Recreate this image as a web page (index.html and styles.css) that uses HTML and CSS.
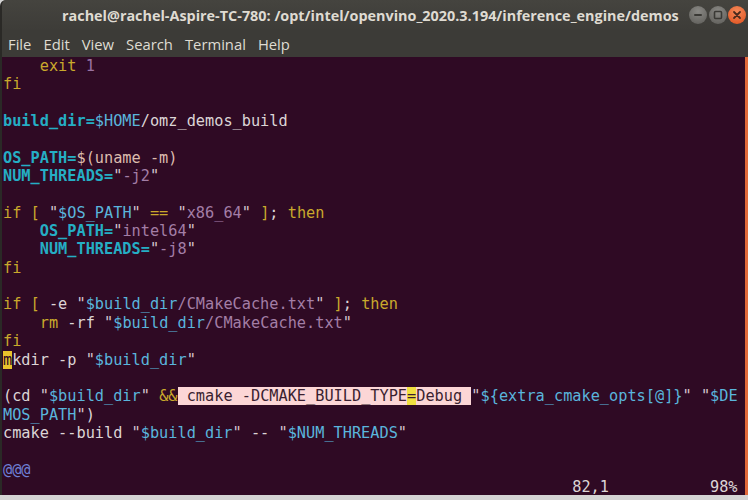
FILE: index.html
```html
<!DOCTYPE html>
<html lang="en">
<head>
  <meta charset="UTF-8">
  <title>Terminal - vim build_demos.sh</title>
  <link rel="stylesheet" href="styles.css">
</head>
<body>
  <div class="window">
    <div class="titlebar">
      <div class="title">rachel@rachel-Aspire-TC-780: /opt/intel/openvino_2020.3.194/inference_engine/demos</div>
      <div class="win-buttons">
        <span class="win-btn">
          <svg width="18" height="18" viewBox="0 0 18 18"><rect x="5" y="8" width="8" height="2" rx="1" fill="#3a3935"/></svg>
        </span>
        <span class="win-btn">
          <svg width="18" height="18" viewBox="0 0 18 18"><rect x="5.5" y="5.5" width="7" height="7" rx="1" fill="none" stroke="#3a3935" stroke-width="1.6"/></svg>
        </span>
        <span class="win-btn close">
          <svg width="18" height="18" viewBox="0 0 18 18"><path d="M6 6 L12 12 M12 6 L6 12" stroke="#4a2a1c" stroke-width="1.8" stroke-linecap="round"/></svg>
        </span>
      </div>
    </div>

    <div class="menubar">
      <span>File</span>
      <span>Edit</span>
      <span>View</span>
      <span>Search</span>
      <span>Terminal</span>
      <span>Help</span>
    </div>

    <div class="terminal">
      <div class="screen">
        <div class="row">    <span class="kw">exit</span> <span class="num">1</span></div>
        <div class="row"><span class="kw">fi</span></div>
        <div class="row"> </div>
        <div class="row"><span class="id">build_dir=</span><span class="var">$HOME</span>/omz_demos_build</div>
        <div class="row"> </div>
        <div class="row"><span class="id">OS_PATH=</span><span class="sub">$(uname -m)</span></div>
        <div class="row"><span class="id">NUM_THREADS=</span><span class="q">"</span><span class="str">-j2</span><span class="q">"</span></div>
        <div class="row"> </div>
        <div class="row"><span class="kw">if [</span> <span class="q">"</span><span class="var">$OS_PATH</span><span class="q">"</span> <span class="kw">==</span> <span class="q">"</span><span class="str">x86_64</span><span class="q">"</span> <span class="kw">]</span>; <span class="kw">then</span></div>
        <div class="row">    <span class="id">OS_PATH=</span><span class="q">"</span><span class="str">intel64</span><span class="q">"</span></div>
        <div class="row">    <span class="id">NUM_THREADS=</span><span class="q">"</span><span class="str">-j8</span><span class="q">"</span></div>
        <div class="row"><span class="kw">fi</span></div>
        <div class="row"> </div>
        <div class="row"><span class="kw">if [</span> -e <span class="q">"</span><span class="var">$build_dir</span><span class="str">/CMakeCache.txt</span><span class="q">"</span> <span class="kw">]</span>; <span class="kw">then</span></div>
        <div class="row">    <span class="kw">rm</span> -rf <span class="q">"</span><span class="var">$build_dir</span><span class="str">/CMakeCache.txt</span><span class="q">"</span></div>
        <div class="row"><span class="kw">fi</span></div>
        <div class="row"><span class="cursor">m</span>kdir -p <span class="q">"</span><span class="var">$build_dir</span><span class="q">"</span></div>
        <div class="row"> </div>
        <div class="row">(cd <span class="q">"</span><span class="var">$build_dir</span><span class="q">"</span> <span class="kw">&amp;&amp;</span><span class="hl"> cmake -DCMAKE_BUILD_TYPE<span class="mark">=</span>Debug </span><span class="q">"</span><span class="var">${extra_cmake_opts[@]}</span><span class="q">"</span> <span class="q">"</span><span class="var">$DE</span></div>
        <div class="row"><span class="var">MOS_PATH</span><span class="q">"</span>)</div>
        <div class="row">cmake --build <span class="q">"</span><span class="var">$build_dir</span><span class="q">"</span> -- <span class="q">"</span><span class="var">$NUM_THREADS</span><span class="q">"</span></div>
        <div class="row"> </div>
        <div class="row"><span class="nontext">@@@</span></div>
        <div class="row ruler">                                                              82,1           98%</div>
      </div>
      <div class="scroll-thumb"></div>
    </div>
  </div>
  <div class="desktop-strip"></div>
</body>
</html>
```

FILE: styles.css
```css
body {
  margin: 0;
  background: #d4d4d4;
  width: 748px;
  height: 500px;
  overflow: hidden;
}

.window {
  background: #3c3b37;
  border-left: 2px solid #2a2926;
  border-top-left-radius: 6px;
  overflow: hidden;
}

.titlebar {
  height: 30px;
  display: flex;
  align-items: center;
  background: linear-gradient(to bottom, #45443f, #3d3c38);
}

.title {
  flex: 1;
  min-width: 0;
  padding-left: 60px;
  white-space: nowrap;
  overflow: hidden;
  font-family: "Open Sans", "DejaVu Sans", sans-serif;
  font-weight: 700;
  font-size: 14.4px;
  color: #dfdbd2;
}

.win-buttons {
  display: flex;
  gap: 1.5px;
  padding-right: 2px;
}

.win-btn {
  width: 18px;
  height: 18px;
  border-radius: 50%;
  background: radial-gradient(circle at 50% 30%, #8a8985, #5c5b57);
  display: flex;
}

.win-btn.close {
  background: radial-gradient(circle at 50% 30%, #f48a5a, #df4f1c);
}

.menubar {
  height: 27px;
  display: flex;
  align-items: center;
  gap: 12px;
  padding-left: 6px;
  font-family: "Open Sans", "DejaVu Sans", sans-serif;
  font-size: 14.8px;
  color: #dfdbd2;
}

.terminal {
  display: flex;
  height: 438px;
  background: #2f0a24;
  overflow: hidden;
}

.screen {
  flex: 1;
  padding-left: 1px;
  font-family: "DejaVu Sans Mono", "Liberation Mono", monospace;
  font-size: 15.25px;
  line-height: 18.35px;
  color: #dcd5d6;
}

.row {
  height: 18.35px;
  white-space: pre;
}

.row.ruler {
  height: 15px;
  line-height: 15px;
  padding-top: 1px;
}

.scroll-thumb {
  width: 3px;
  background: #e1693a;
}

.kw { color: #c9a92c; }
.id { color: #25aec4; font-weight: bold; }
.var { color: #5ab5dc; }
.str { color: #a37ea6; }
.q { color: #d6c6cf; }
.num { color: #9a72a2; }
.sub { color: #dcbcae; }
.nontext { color: #6e80d6; }

.cursor {
  background: #e8c32c;
  color: #2f0a24;
}

.hl {
  background: #fcd6d6;
  color: #3a1f30;
}

.hl .mark {
  background: #f0e040;
}

.desktop-strip {
  height: 5px;
  background: #d4d4d4;
}
```
